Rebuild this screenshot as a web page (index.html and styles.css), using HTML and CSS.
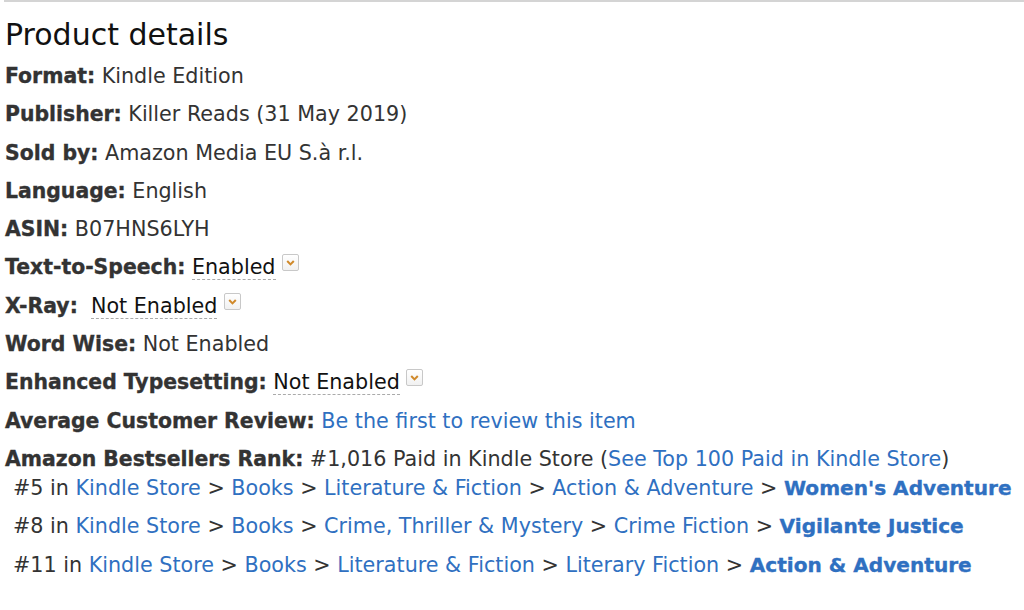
FILE: index.html
```html
<!DOCTYPE html>
<html>
<head>
<meta charset="utf-8">
<link rel="stylesheet" href="styles.css">
</head>
<body>
<div class="page">
  <h2 class="title">Product details</h2>
  <ul class="details">
    <li><b>Format:</b> Kindle Edition</li>
    <li><b>Publisher:</b> Killer Reads (31 May 2019)</li>
    <li><b>Sold by:</b> Amazon Media EU S.à r.l.</li>
    <li><b>Language:</b> English</li>
    <li><b>ASIN:</b> B07HNS6LYH</li>
    <li><b>Text-to-Speech:</b> <span class="pop">Enabled</span> <span class="chev"><svg viewBox="0 0 16 16" width="16" height="16"><path d="M4.5 6.5 L8 10 L11.5 6.5" fill="none" stroke="#d0892a" stroke-width="2.2"/></svg></span></li>
    <li><b>X-Ray:</b>&nbsp; <span class="pop">Not Enabled</span> <span class="chev"><svg viewBox="0 0 16 16" width="16" height="16"><path d="M4.5 6.5 L8 10 L11.5 6.5" fill="none" stroke="#d0892a" stroke-width="2.2"/></svg></span></li>
    <li><b>Word Wise:</b> Not Enabled</li>
    <li><b>Enhanced Typesetting:</b> <span class="pop">Not Enabled</span> <span class="chev"><svg viewBox="0 0 16 16" width="16" height="16"><path d="M4.5 6.5 L8 10 L11.5 6.5" fill="none" stroke="#d0892a" stroke-width="2.2"/></svg></span></li>
    <li><b>Average Customer Review:</b> <a href="#">Be the first to review this item</a></li>
    <li class="rank"><b>Amazon Bestsellers Rank:</b> #1,016 Paid in Kindle Store (<a href="#">See Top 100 Paid in Kindle Store</a>)
      <ul class="ranks">
        <li>#5 in <a href="#">Kindle Store</a> &gt; <a href="#">Books</a> &gt; <a href="#">Literature &amp; Fiction</a> &gt; <a href="#">Action &amp; Adventure</a> &gt; <a href="#" class="strong">Women's Adventure</a></li>
        <li>#8 in <a href="#">Kindle Store</a> &gt; <a href="#">Books</a> &gt; <a href="#">Crime, Thriller &amp; Mystery</a> &gt; <a href="#">Crime Fiction</a> &gt; <a href="#" class="strong">Vigilante Justice</a></li>
        <li>#11 in <a href="#">Kindle Store</a> &gt; <a href="#">Books</a> &gt; <a href="#">Literature &amp; Fiction</a> &gt; <a href="#">Literary Fiction</a> &gt; <a href="#" class="strong">Action &amp; Adventure</a></li>
      </ul>
    </li>
  </ul>
</div>
</body>
</html>
```

FILE: styles.css
```css
html, body {
  margin: 0;
  padding: 0;
  background: #fff;
}
.page {
  border-top: 2px solid #d4d4d4;
  margin-left: 4px;
  padding-left: 1px;
  font-family: "DejaVu Sans", Verdana, sans-serif;
  font-size: 20.7px;
  line-height: 29px;
  color: #333;
}
.title {
  margin: 0;
  padding-top: 15px;
  font-size: 30px;
  line-height: 36px;
  font-weight: normal;
  color: #111;
  margin-bottom: 9px;
}
.details {
  list-style: none;
  margin: 0;
  padding: 0;
}
.details > li {
  margin-bottom: 9.3px;
}
.details b,
a.strong {
  font-weight: bold;
  -webkit-text-stroke: 0.35px currentColor;
}
.details b {
  color: #333;
  font-size: 20.4px;
}
a.strong {
  font-size: 20.1px;
}
a {
  color: #2f70c1;
  text-decoration: none;
}
.pop {
  color: #111;
  border-bottom: 1px dashed #aaa;
}
.chev {
  display: inline-block;
  width: 17px;
  height: 17px;
  border: 1px solid #c8c8c8;
  border-radius: 2px;
  background: linear-gradient(#fff, #f1f1f1);
  vertical-align: top;
  margin-top: 1px;
  box-sizing: border-box;
  line-height: 0;
}
.chev svg {
  width: 15px;
  height: 15px;
}
.ranks {
  list-style: none;
  margin: 0;
  padding: 0 0 0 8px;
}
.ranks li {
  margin-bottom: 9.5px;
}
```
